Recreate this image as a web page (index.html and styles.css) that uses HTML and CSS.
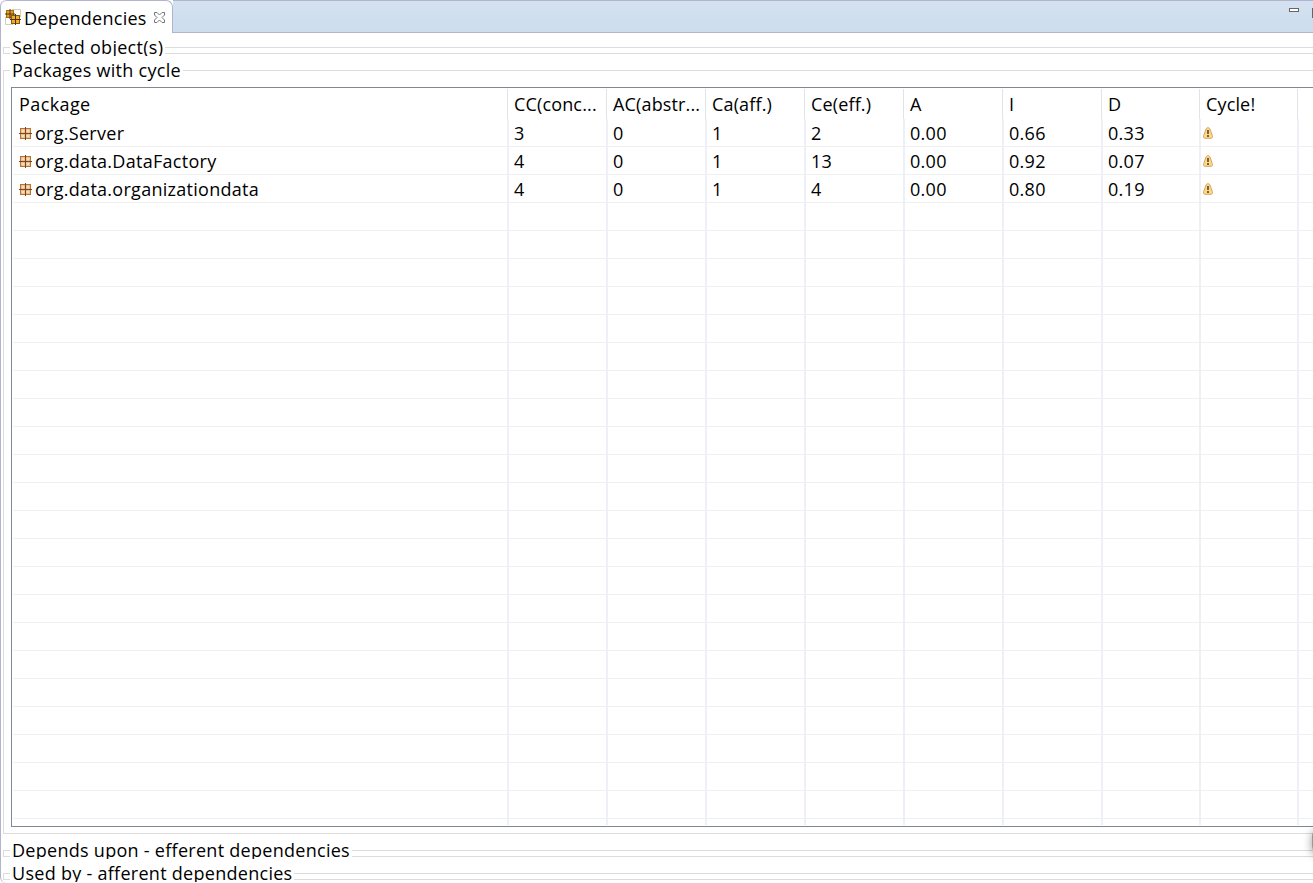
FILE: index.html
```html
<!DOCTYPE html>
<html lang="en">
<head>
<meta charset="utf-8">
<title>Dependencies</title>
<link rel="stylesheet" href="styles.css">
</head>
<body>
<svg class="defs" width="0" height="0">
  <symbol id="pkg" viewBox="0 0 13 13">
    <rect x="1.5" y="1.5" width="10" height="10" fill="#e3b07a" stroke="#b87333"/>
    <path d="M2.500 4h3M7.500 4h3M2.500 9h3M7.500 9h3" stroke="#f8dcb4" stroke-width="3" fill="none"/>
    <path d="M6.5 0v13M0 6.5h13" stroke="#7a4526" fill="none"/>
  </symbol>
  <symbol id="warn" viewBox="0 0 10 12">
    <path d="M5 .7C6.300.7 6.900 1.500 7.300 3l2 5.500c.6 1.800 0 2.800-1.300 2.800H2C.7 11.300.1 10.300.7 8.500L2.700 3C3.100 1.500 3.700.7 5 .7z" fill="#fbd98a" stroke="#d9a45a"/>
    <path d="M5 3v4M5 8v2" stroke="#5c4328" stroke-width="1.600" fill="none"/>
  </symbol>
</svg>
<div class="view">
  <header class="tabbar">
    <div class="tab">
      <svg class="tab-icon" width="16" height="16" viewBox="0 0 16 16">
        <path d="M7 .5h8.500V8M.5 8v7.500H8" fill="none" stroke="#d5cfb4"/>
        <rect x="1.500" y="1.500" width="7" height="7" fill="#e5a323" stroke="#a86a12"/>
        <path d="M5 0v10M0 5h10" stroke="#53320f" fill="none"/>
        <rect x="6.500" y="6.500" width="8" height="8" fill="#eeb02c" stroke="#8b5710"/>
        <path d="M10.500 5v11M5 10.500h11" stroke="#53320f" fill="none"/>
      </svg>
      <span class="tab-title">Dependencies</span>
      <svg class="tab-close" width="11" height="11" viewBox="0 0 11 11">
        <path d="M.5.5h2.500l2.500 2.500L8 .5h2.500V3L8 5.500 10.500 8v2.500H8L5.500 8 3 10.500H.5V8L3 5.500.5 3z" fill="#fff" stroke="#777"/>
      </svg>
    </div>
    <div class="strip"><span class="minimize"></span><span class="maximize"></span></div>
  </header>
  <main class="content">
    <section class="group small"><h2>Selected object(s)</h2></section>
    <section class="group main"><h2>Packages with cycle</h2>
      <div class="table">
        <div class="row head"><span>Package</span><span>CC(conc...</span><span>AC(abstr...</span><span>Ca(aff.)</span><span>Ce(eff.)</span><span>A</span><span>I</span><span>D</span><span>Cycle!</span><span></span></div>
        <div class="row"><span><svg class="pkg"><use href="#pkg"/></svg>org.Server</span><span>3</span><span>0</span><span>1</span><span>2</span><span>0.00</span><span>0.66</span><span>0.33</span><span><svg class="warn"><use href="#warn"/></svg></span><span></span></div>
        <div class="row"><span><svg class="pkg"><use href="#pkg"/></svg>org.data.DataFactory</span><span>4</span><span>0</span><span>1</span><span>13</span><span>0.00</span><span>0.92</span><span>0.07</span><span><svg class="warn"><use href="#warn"/></svg></span><span></span></div>
        <div class="row"><span><svg class="pkg"><use href="#pkg"/></svg>org.data.organizationdata</span><span>4</span><span>0</span><span>1</span><span>4</span><span>0.00</span><span>0.80</span><span>0.19</span><span><svg class="warn"><use href="#warn"/></svg></span><span></span></div>
        <div class="row empty"><span></span><span></span><span></span><span></span><span></span><span></span><span></span><span></span><span></span><span></span></div>
      </div>
    </section>
    <section class="group small"><h2>Depends upon - efferent dependencies</h2></section>
    <section class="group small"><h2>Used by - afferent dependencies</h2></section>
  </main>
  <div class="edge-bubble"></div>
</div>
</body>
</html>
```

FILE: styles.css
```css
* { box-sizing: border-box; }
body {
  margin: 0;
  width: 1313px;
  height: 883px;
  overflow: hidden;
  background: #fff;
  color: #000;
  font: 18px/24px "Open Sans", "Noto Sans", sans-serif;
  letter-spacing: .28px;
}
.defs { position: absolute; }
.view {
  position: relative;
  height: 883px;
  overflow: hidden;
  border-left: 1px solid #b2b4cc;
  border-radius: 6px 0 0 6px;
}
.tabbar { display: flex; height: 33px; }
.tab {
  display: flex;
  align-items: center;
  width: 172px;
  padding: 2px 0 0 4px;
  border: 1px solid #b2b4cc;
  border-width: 1px 1px 0 0;
  border-radius: 6px 7px 0 0;
}
.tab-icon { flex: none; margin-top: -3px; }
.tab-title { width: 123px; margin-left: 3px; }
.tab-close { flex: none; margin: -2px 0 0 7px; }
.strip {
  display: flex;
  flex: 1;
  justify-content: flex-end;
  gap: 13px;
  padding-top: 7px;
  border-top: 1px solid #b2b4cc;
  border-bottom: 1px solid #b2b4cc;
  background: linear-gradient(#d4e1f0, #ccdded);
}
.minimize { width: 10px; height: 4px; border: 1px solid #666; background: #fff; }
.maximize { width: 1px; height: 10px; background: #666; }
.content { padding: 14px 0 0 2px; }
.group {
  position: relative;
  border: 1px solid #dcdcdc;
  border-right: 0;
}
.group h2 {
  position: absolute;
  left: 6px;
  top: -14px;
  height: 26px;
  margin: 0;
  padding: 0 2px;
  background: #fff;
  font: inherit;
  line-height: 26px;
  white-space: nowrap;
}
.small { height: 7px; margin-bottom: 16px; }
.small h2 { height: 22px; overflow: hidden; }
.main { height: 764px; margin-bottom: 16px; padding: 16px 0 0 7px; }
.table {
  height: 740px;
  display: flex;
  flex-direction: column;
  border: 1px solid #828790;
  border-right: 0;
  padding-bottom: 1px;
}
.row {
  display: grid;
  grid-template-columns: 495px repeat(6, 99px) 98px 98px 1fr;
  flex: none;
  height: 28px;
  background: linear-gradient(#f0f0f0, #f0f0f0) 1px 27px / 100% 1px no-repeat;
}
.row span {
  display: flex;
  align-items: center;
  padding-left: 5px;
  border-left: 2px solid #edf0f7;
  white-space: nowrap;
}
.row span:first-child { border: 0; padding-left: 7px; }
.head { height: 31px; padding-top: 1px; background: none; letter-spacing: .15px; }
.head span { padding-left: 6px; border-left: 1px solid #e3e3e3; }
.head span:first-child { letter-spacing: .4px; }
.empty { flex: 1; background: repeating-linear-gradient(#fff 0 27px, #f0f0f0 27px 28px) 1px 0 no-repeat; }
.pkg { width: 13px; height: 13px; margin-right: 3px; }
.warn { width: 10px; height: 12px; margin: -1px 0 0 -3px; }
.edge-bubble {
  position: absolute;
  left: 1311px;
  top: 828px;
  width: 24px;
  height: 26px;
  border: 1px solid #999;
  border-radius: 8px;
  background: #ddd;
  box-shadow: 0 2px 10px rgba(0, 0, 0, .4);
}
```
